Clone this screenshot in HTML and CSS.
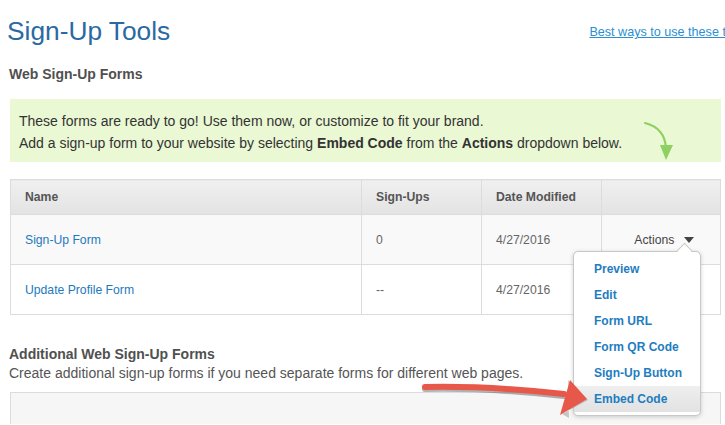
FILE: index.html
```html
<html>
<head>
	<title>Sign-Up Tools</title>
	<link rel="stylesheet" href="styles.css">
</head>
<body>

<div class="page">
	<div class="topbar">
		<h1 class="title">Sign-Up Tools</h1>
		<a class="helplink" href="#">Best ways to use these tools</a>
	</div>

	<h2 class="section">Web Sign-Up Forms</h2>

	<div class="tip">
		<p>These forms are ready to go! Use them now, or customize to fit your brand.</p>
		<p>Add a sign-up form to your website by selecting <b>Embed Code</b> from the <b>Actions</b> dropdown below.</p>
		<svg class="tip-arrow" width="34" height="44" viewBox="0 0 34 44">
			<path d="M2 2 C14 5 22 12 23 27" fill="none" stroke="#8fd062" stroke-width="2.2" stroke-linecap="round"/>
			<polygon points="17,24 30,24 23,39" fill="#8fd062"/>
		</svg>
	</div>

	<table class="forms">
		<tr class="head">
			<th class="c-name">Name</th>
			<th class="c-num">Sign-Ups</th>
			<th class="c-date">Date Modified</th>
			<th class="c-act"></th>
		</tr>
		<tr class="odd">
			<td><a href="#">Sign-Up Form</a></td>
			<td class="muted">0</td>
			<td class="muted">4/27/2016</td>
			<td class="act">
				<span class="actions">Actions <span class="caret"></span></span>
				<ul class="menu">
					<li><a href="#">Preview</a></li>
					<li><a href="#">Edit</a></li>
					<li><a href="#">Form URL</a></li>
					<li><a href="#">Form QR Code</a></li>
					<li><a href="#">Sign-Up Button</a></li>
					<li class="hover"><a href="#">Embed Code</a></li>
				</ul>
			</td>
		</tr>
		<tr>
			<td><a href="#">Update Profile Form</a></td>
			<td class="muted">--</td>
			<td class="muted">4/27/2016</td>
			<td></td>
		</tr>
	</table>

	<h2 class="section more">Additional Web Sign-Up Forms</h2>
	<p class="lead">Create additional sign-up forms if you need separate forms for different web pages.</p>
	<div class="panel"></div>
</div>

<svg class="red-arrow" width="175" height="55" viewBox="0 0 175 55">
	<path d="M7 19 C50 18 100 21 146 26" fill="none" stroke="#222" stroke-opacity="0.35" stroke-width="6" stroke-linecap="round"/>
	<path d="M7 17 C50 16 100 19 146 24" fill="none" stroke="#e8584a" stroke-width="6" stroke-linecap="round"/>
	<polygon points="144,44 170,30 150,10 151,48" fill="#333" fill-opacity="0.25"/>
	<polygon points="152,10 169,29 142,45" fill="#e8584a"/>
</svg>

</body>
</html>
```

FILE: styles.css
```css
body {
	margin: 0;
	font-family: "Liberation Sans", Arial, sans-serif;
	color: #333;
	background: #fff;
	overflow: hidden;
	position: relative;
	height: 425px;
}
.page {
	width: 711px;
	padding: 0 0 0 10px;
}
.topbar {
	display: flex;
	justify-content: space-between;
	align-items: flex-end;
	width: 742px;
	margin-left: -3px;
	height: 50px;
}
.title {
	font-size: 26.3px;
	font-weight: normal;
	color: #2a6aa2;
	margin: 0;
	line-height: 32px;
	padding-bottom: 3px;
}
.helplink {
	font-size: 12.6px;
	color: #2a8fd2;
	padding-bottom: 11px;
	white-space: nowrap;
}
.section {
	font-size: 14px;
	font-weight: bold;
	color: #505050;
	margin: 0;
	margin-left: -1px;
	padding: 16px 0 17px;
	line-height: 16px;
}
.tip {
	position: relative;
	background: #eaf8d4;
	padding: 11px 9px 9px;
	height: 43px;
}
.tip p {
	margin: 0;
	font-size: 14px;
	line-height: 22px;
	color: #333;
}
.tip-arrow {
	position: absolute;
	left: 633px;
	top: 22px;
}
.forms {
	margin-top: 17px;
	width: 711px;
	table-layout: fixed;
	border-collapse: collapse;
	font-size: 12.2px;
	border: 1px solid #dcdcdc;
}
.forms th, .forms td {
	border: 1px solid #dcdcdc;
	text-align: left;
	padding: 0 14px;
	box-sizing: border-box;
}
.forms th {
	height: 35px;
	color: #555;
	background: linear-gradient(#f0f0f0, #e3e3e3);
	font-weight: bold;
}
.forms td {
	height: 50px;
}
.c-name { width: 351px; }
.c-num { width: 120px; }
.c-date { width: 120px; }
.forms tr.odd td { background: #f9f9f9; }
.forms a {
	color: #1c7abd;
	text-decoration: none;
}
.muted { color: #666; }
.forms td.act {
	position: relative;
	text-align: center;
	padding: 0;
	color: #444;
}
.actions {
	display: inline-block;
	padding-left: 6px;
}
.caret {
	display: inline-block;
	width: 0;
	height: 0;
	border-left: 5px solid transparent;
	border-right: 5px solid transparent;
	border-top: 6px solid #444;
	margin-left: 6px;
	vertical-align: 1px;
}
.menu {
	position: absolute;
	left: -29px;
	top: 36px;
	width: 126px;
	margin: 0;
	padding: 4px 0 3px;
	list-style: none;
	background: #fff;
	border: 1px solid #c8c8c8;
	border-radius: 5px;
	box-shadow: 0 1px 4px rgba(0, 0, 0, 0.18);
	text-align: left;
	font-size: 12px;
	z-index: 2;
}
.menu::before {
	content: "";
	position: absolute;
	top: -7px;
	left: 105px;
	width: 10px;
	height: 10px;
	background: #fff;
	border-left: 1px solid #c8c8c8;
	border-top: 1px solid #c8c8c8;
	transform: rotate(45deg);
}
.menu li {
	height: 26px;
	line-height: 26px;
	padding-left: 20px;
}
.menu a {
	font-weight: bold;
	color: #1e7dc0;
}
.menu li.hover {
	background: linear-gradient(#efefef, #e2e2e2);
}
.section.more {
	padding: 31px 0 2px;
}
.lead {
	margin: 0 0 0 -1px;
	font-size: 14px;
	line-height: 19px;
	color: #555;
}
.panel {
	margin-top: 9px;
	height: 31px;
	background: #f6f6f6;
	border: 1px solid #dcdcdc;
	border-bottom: none;
}
.red-arrow {
	position: absolute;
	left: 418px;
	top: 370px;
	z-index: 3;
}
```
